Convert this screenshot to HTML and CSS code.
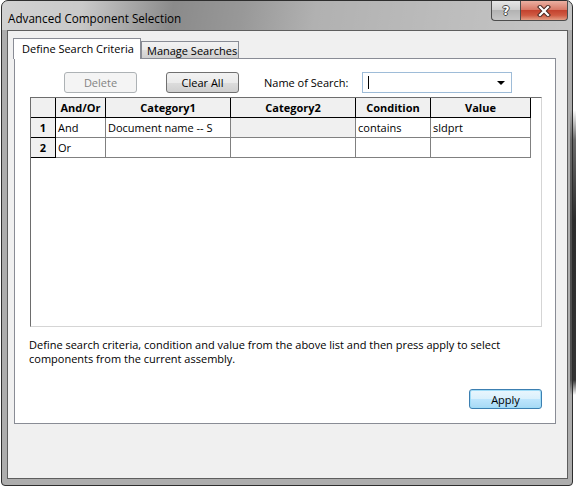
FILE: index.html
```html
<!DOCTYPE html>
<html lang="en">
<head>
  <meta charset="UTF-8">
  <meta name="viewport" content="width=device-width, initial-scale=1.0">
  <title>Advanced Component Selection</title>
  <link rel="stylesheet" href="styles.css">
</head>
<body>
  <div class="window">
    <div class="titlebar">
      <div class="title">Advanced Component Selection</div>
      <div class="caption-btns">
        <div class="cap-btn help">?</div>
        <div class="cap-btn close">
          <svg width="14" height="12" viewBox="0 0 14 12">
            <path d="M3 2 L11 10 M11 2 L3 10" stroke="#4a2a24" stroke-width="4.2" stroke-linecap="square"/>
            <path d="M3 2 L11 10 M11 2 L3 10" stroke="#fff" stroke-width="2.2" stroke-linecap="square"/>
          </svg>
        </div>
      </div>
    </div>

    <div class="client">
      <div class="tabs">
        <div class="tab active">Define Search Criteria</div>
        <div class="tab">Manage Searches</div>
      </div>

      <div class="panel">
        <div class="toolbar">
          <button class="btn disabled">Delete</button>
          <button class="btn clear">Clear All</button>
          <span class="search-label">Name of Search:</span>
          <div class="combo">
            <span class="caret"></span>
            <span class="arrow"></span>
          </div>
        </div>

        <div class="grid">
          <div class="grid-rows">
            <div class="cell hd"></div>
            <div class="cell hd">And/Or</div>
            <div class="cell hd">Category1</div>
            <div class="cell hd">Category2</div>
            <div class="cell hd">Condition</div>
            <div class="cell hd">Value</div>

            <div class="cell rh">1</div>
            <div class="cell">And</div>
            <div class="cell">Document name -- S</div>
            <div class="cell off"></div>
            <div class="cell">contains</div>
            <div class="cell">sldprt</div>

            <div class="cell rh">2</div>
            <div class="cell">Or</div>
            <div class="cell"></div>
            <div class="cell"></div>
            <div class="cell"></div>
            <div class="cell"></div>
          </div>
        </div>

        <p class="note">Define search criteria, condition and value from the above list and then press apply to select<br>components from the current assembly.</p>

        <div class="actions">
          <button class="btn default">Apply</button>
        </div>
      </div>
    </div>
  </div>
</body>
</html>
```

FILE: styles.css
```css
body {
  margin: 0;
  font-family: 'Open Sans', 'Noto Sans', sans-serif;
  font-size: 11px;
  color: #000;
  background: #fff linear-gradient(to bottom, #fff 0, #fff 110px, #6a6a6a 140px, #2c2c2c 220px, #333 380px, #fff 395px) no-repeat right top / 6px 100%;
}

/* window frame */
.window {
  width: 572px;
  height: 486px;
  margin-left: 1px;
  box-sizing: border-box;
  border: 1px solid #2e2e2e;
  border-radius: 7px 7px 4px 4px;
  background: rgba(105, 105, 105, 0.55);
  display: flex;
  flex-direction: column;
  padding: 0 4px 6px 5px;
}

.titlebar {
  height: 29px;
  margin: 0 -4px 0 -5px;
  padding-left: 6px;
  display: flex;
  justify-content: space-between;
  border-radius: 6px 6px 0 0;
  background: linear-gradient(100deg, rgba(255,255,255,0.45) 0, rgba(255,255,255,0.35) 14%, rgba(0,0,0,0.2) 30%, rgba(0,0,0,0.12) 42%, rgba(255,255,255,0.05) 55%, rgba(255,255,255,0.2) 80%, rgba(255,255,255,0.3) 100%);
}

.title {
  font-size: 11.7px;
  line-height: 16px;
  padding-top: 9px;
  color: #000;
}

.caption-btns {
  display: flex;
  margin-right: 4px;
}

.cap-btn {
  height: 20px;
  box-sizing: border-box;
  border: 1px solid #4d4d4d;
  border-top: none;
  display: flex;
  align-items: center;
  justify-content: center;
}

.help {
  width: 29px;
  border-radius: 0 0 0 4px;
  border-right: none;
  background: linear-gradient(#e6e6e6, #cfcfcf 45%, #b3b3b3 50%, #c6c6c6);
  font-family: 'DejaVu Sans', sans-serif;
  font-weight: bold;
  font-size: 12px;
  color: #fff;
  text-shadow: 1px 0 0 #444, -1px 0 0 #444, 0 1px 0 #444, 0 -1px 0 #444;
}

.close {
  width: 48px;
  border-radius: 0 0 4px 0;
  background: linear-gradient(#eab0a2, #d87a68 45%, #c4432f 50%, #cf5a42 75%, #e39d84);
}

/* client area */
.client {
  flex: 1;
  border: 1px solid #5e5e5e;
  background: #f0f0f0;
  padding: 7px 0 0 6px;
}

.tabs {
  display: flex;
  align-items: flex-start;
  height: 20px;
  margin-left: -1px;
}

.tab {
  box-sizing: border-box;
  height: 17px;
  margin-top: 3px;
  width: 98px;
  border: 1px solid #898c95;
  border-bottom: none;
  background: linear-gradient(#f2f2f2, #ebebeb 50%, #dddddd 50%, #cfcfcf);
  line-height: 17px;
  padding-left: 5px;
  white-space: nowrap;
}

.tab.active {
  position: relative;
  z-index: 1;
  width: 128px;
  height: 21px;
  margin-top: 0;
  background: #fff;
  padding-left: 8px;
  line-height: 19px;
}

.panel {
  width: 542px;
  height: 366px;
  box-sizing: border-box;
  border: 1px solid #898c95;
  background: #fff;
  padding-top: 13px;
}

.toolbar {
  display: flex;
  align-items: flex-start;
  padding-left: 49px;
}

.btn {
  font-family: inherit;
  font-size: 11px;
  box-sizing: border-box;
  width: 73px;
  height: 21px;
  padding: 0;
  border: 1px solid #707070;
  border-radius: 3px;
  background: linear-gradient(#f2f2f2, #ebebeb 50%, #dddddd 50%, #cfcfcf);
  color: #000;
}

.btn.disabled {
  border-color: #adb2b5;
  background: #f4f4f4;
  color: #838383;
}

.btn.clear {
  margin-left: 29px;
}

.btn.default {
  height: 20px;
  border-color: #3c7fb1;
  background: linear-gradient(#eaf6fd, #d9f0fc 50%, #bee6fd 50%, #a7d9f5);
  box-shadow: inset 0 0 0 1px #9fdcf7;
}

.search-label {
  width: 98px;
  margin-left: 25px;
  line-height: 21px;
}

.combo {
  position: relative;
  width: 150px;
  height: 21px;
  box-sizing: border-box;
  border: 1px solid #9ebcd8;
  background: #fff;
}

.caret {
  position: absolute;
  left: 5px;
  top: 3px;
  width: 1px;
  height: 13px;
  background: #000;
}

.arrow {
  position: absolute;
  right: 6px;
  top: 8px;
  border-left: 4px solid transparent;
  border-right: 4px solid transparent;
  border-top: 4px solid #000;
}

/* search grid */
.grid {
  width: 512px;
  height: 230px;
  box-sizing: border-box;
  margin: 4px 0 0 15px;
  border: 1px solid #d5d5d5;
  border-top-color: #6d6d6d;
  border-left-color: #6d6d6d;
  background: #fff;
}

.grid-rows {
  display: grid;
  grid-template-columns: 25px 50px 125px 125px 75px 100px;
  grid-auto-rows: 20px;
}

.cell {
  box-sizing: border-box;
  border-right: 1px solid #808080;
  border-bottom: 1px solid #808080;
  padding-left: 2px;
  line-height: 19px;
  white-space: nowrap;
  overflow: hidden;
}

.cell.hd {
  background: #f0f0f0;
  border-color: #000;
  font-weight: bold;
  text-align: center;
  padding-left: 0;
}

.cell.rh {
  background: #f0f0f0;
  border-color: #000;
  font-weight: bold;
  text-align: center;
  padding-left: 0;
}

.cell.off {
  background: #f0f0f0;
}

.note {
  margin: 11px 0 0 14px;
  line-height: 14px;
}

.actions {
  display: flex;
  justify-content: flex-end;
  margin: 23px 13px 0 0;
}
```
